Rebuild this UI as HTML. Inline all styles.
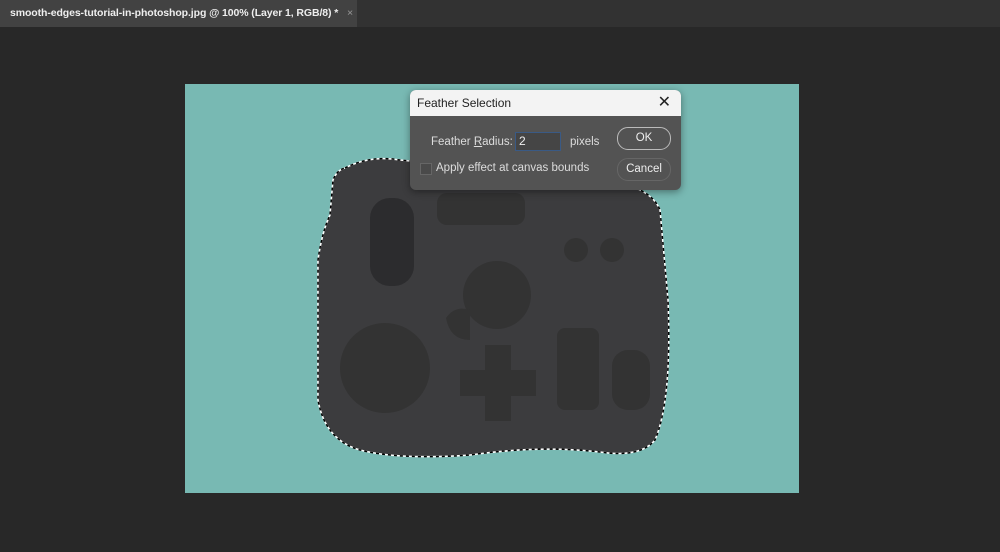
<!DOCTYPE html>
<html><head><style>
body{margin:0;width:1000px;height:552px;background:#282828;position:relative;overflow:hidden;font-family:"Liberation Sans",sans-serif}
.tabbar{position:absolute;left:0;top:0;width:1000px;height:27px;background:#323232}
.tab{position:absolute;left:0;top:0;width:357px;height:27px;background:#424242;color:#eee;font-size:10.5px;letter-spacing:-0.1px;font-weight:bold;line-height:27px;padding-left:10px;box-sizing:border-box;white-space:nowrap;overflow:hidden}
.tab span{color:#999;font-weight:normal;margin-left:6px}
.dlg{position:absolute;left:410px;top:90px;width:271px;height:100px;background:#535353;border-radius:6px;overflow:hidden;box-shadow:0 2px 8px rgba(0,0,0,.4)}
.tt{height:26px;background:#f3f3f3;color:#222;font-size:12px;line-height:26px;padding-left:7px;position:relative}
.tt b{position:absolute;right:10px;top:0;font-weight:normal;font-size:16px}
.l{position:absolute;color:#ddd;font-size:11.5px;white-space:nowrap}
.btn{position:absolute;left:207px;width:52px;height:21px;border:1px solid #bbb;border-radius:11px;color:#eee;font-size:11.5px;text-align:center;line-height:21px}
</style></head><body>
<div class="tabbar"><div class="tab">smooth-edges-tutorial-in-photoshop.jpg @ 100% (Layer 1, RGB/8) * <span>×</span></div></div>
<svg style="position:absolute;left:0;top:0" width="1000" height="552">
<rect x="185" y="84" width="614" height="409" fill="#78b9b3"/>
<path d="M345 168 Q370 155 400 160 L600 180 Q650 185 660 210 L668 300 Q672 400 655 440 Q640 458 600 452 Q540 445 470 455 Q400 460 360 450 Q325 440 318 400 L318 260 Q322 232 330 215 L333 180 Q337 170 345 168Z" fill="#3c3c3e" stroke="#fff" stroke-width="1.5"/>
<path d="M345 168 Q370 155 400 160 L600 180 Q650 185 660 210 L668 300 Q672 400 655 440 Q640 458 600 452 Q540 445 470 455 Q400 460 360 450 Q325 440 318 400 L318 260 Q322 232 330 215 L333 180 Q337 170 345 168Z" fill="none" stroke="#000" stroke-width="1.5" stroke-dasharray="3 3"/>
<rect x="370" y="198" width="44" height="88" rx="20" fill="#2c2c2e"/>
<rect x="437" y="193" width="88" height="32" rx="10" fill="#333"/>
<circle cx="576" cy="250" r="12" fill="#333"/><circle cx="612" cy="250" r="12" fill="#333"/>
<circle cx="497" cy="295" r="34" fill="#333"/>
<circle cx="385" cy="368" r="45" fill="#333"/>
<path d="M485 345h26v25h25v26h-25v25h-26v-25h-25v-26h25z" fill="#333"/>
<rect x="557" y="328" width="42" height="82" rx="8" fill="#333"/>
<rect x="612" y="350" width="38" height="60" rx="16" fill="#333"/>
<path d="M446 318 Q455 305 470 310 L470 340 Q450 340 446 318Z" fill="#333"/>
</svg>
<div class="dlg">
<div class="tt">Feather Selection<b>✕</b></div>
<div class="l" style="left:21px;top:46px">Feather <u>R</u>adius:</div>
<div style="position:absolute;left:105px;top:42px;width:46px;height:19px;background:#454545;border:1px solid #3a5a85;color:#eee;font-size:12px;line-height:17px;padding-left:3px;box-sizing:border-box">2</div>
<div class="l" style="left:160px;top:46px">pixels</div>
<div style="position:absolute;left:10px;top:73px;width:10px;height:10px;border:1px solid #666;background:#4a4a4a"></div>
<div class="l" style="left:26px;top:72px">Apply effect at canvas bounds</div>
<div class="btn" style="top:37px">OK</div>
<div class="btn" style="top:68px;border-color:#666">Cancel</div>
</div>
</body></html>
